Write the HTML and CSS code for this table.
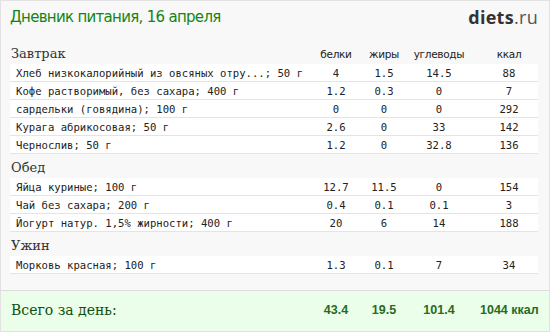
FILE: index.html
```html
<!DOCTYPE html>
<html lang="ru">
<head>
<meta charset="utf-8">
<title>Дневник питания</title>
<link rel="stylesheet" href="styles.css">
</head>
<body>
<div class="page">
  <div class="header">
    <div class="title">Дневник питания, 16 апреля</div>
    <div class="logo"><span class="logo-b">diets</span>.ru</div>
  </div>

  <div class="section">
    <div class="sec-head">
      <div class="sec-name">Завтрак</div>
      <div class="c c1 lbl">белки</div>
      <div class="c c2 lbl">жиры</div>
      <div class="c c3 lbl">углеводы</div>
      <div class="c c4 lbl">ккал</div>
    </div>
    <div class="row"><div class="name">Хлеб низкокалорийный из овсяных отру...; 50 г</div><div class="c c1">4</div><div class="c c2">1.5</div><div class="c c3">14.5</div><div class="c c4">88</div></div>
    <div class="row"><div class="name">Кофе растворимый, без сахара; 400 г</div><div class="c c1">1.2</div><div class="c c2">0.3</div><div class="c c3">0</div><div class="c c4">7</div></div>
    <div class="row"><div class="name">сардельки (говядина); 100 г</div><div class="c c1">0</div><div class="c c2">0</div><div class="c c3">0</div><div class="c c4">292</div></div>
    <div class="row"><div class="name">Курага абрикосовая; 50 г</div><div class="c c1">2.6</div><div class="c c2">0</div><div class="c c3">33</div><div class="c c4">142</div></div>
    <div class="row"><div class="name">Чернослив; 50 г</div><div class="c c1">1.2</div><div class="c c2">0</div><div class="c c3">32.8</div><div class="c c4">136</div></div>
  </div>

  <div class="section">
    <div class="sec-head"><div class="sec-name">Обед</div></div>
    <div class="row"><div class="name">Яйца куриные; 100 г</div><div class="c c1">12.7</div><div class="c c2">11.5</div><div class="c c3">0</div><div class="c c4">154</div></div>
    <div class="row"><div class="name">Чай без сахара; 200 г</div><div class="c c1">0.4</div><div class="c c2">0.1</div><div class="c c3">0.1</div><div class="c c4">3</div></div>
    <div class="row"><div class="name">Йогурт натур. 1,5% жирности; 400 г</div><div class="c c1">20</div><div class="c c2">6</div><div class="c c3">14</div><div class="c c4">188</div></div>
  </div>

  <div class="section">
    <div class="sec-head"><div class="sec-name">Ужин</div></div>
    <div class="row"><div class="name">Морковь красная; 100 г</div><div class="c c1">1.3</div><div class="c c2">0.1</div><div class="c c3">7</div><div class="c c4">34</div></div>
  </div>

  <div class="footer">
    <div class="total-label">Всего за день:</div>
    <div class="c c1 tot">43.4</div>
    <div class="c c2 tot">19.5</div>
    <div class="c c3 tot">101.4</div>
    <div class="c c4 tot">1044 ккал</div>
  </div>
</div>
</body>
</html>
```

FILE: styles.css
```css
html, body {
  margin: 0;
  padding: 0;
  background: #f8f8f8;
}

.page {
  width: 548px;
  height: 330px;
  border: 1px solid #e2e2e2;
  background: #f8f8f8;
  display: flex;
  flex-direction: column;
  overflow: hidden;
}

.header {
  height: 39px;
  display: flex;
  justify-content: space-between;
  align-items: flex-start;
  padding: 0 11px 0 9px;
}

.title {
  font-family: "DejaVu Sans", sans-serif;
  font-size: 15px;
  letter-spacing: -0.7px;
  color: #128512;
  line-height: 18px;
  padding-top: 7px;
}

.logo {
  font-family: "Open Sans", sans-serif;
  font-size: 18px;
  line-height: 20px;
  padding-top: 6px;
  color: #555;
  letter-spacing: 0.3px;
}

.logo-b {
  font-weight: 700;
  color: #333;
}

.section {
  padding: 0 11px 0 9px;
}

.sec-head {
  height: 24px;
  display: flex;
  align-items: flex-end;
}

.sec-name {
  flex: 1;
  font-family: "DejaVu Serif", serif;
  font-size: 13px;
  line-height: 18px;
  color: #333;
  padding-left: 1px;
  padding-bottom: 1px;
}

.lbl {
  font-family: "DejaVu Sans", sans-serif;
  font-size: 10.5px;
  letter-spacing: -0.3px;
  line-height: 18px;
  padding-bottom: 1px;
  color: #222;
}

.row {
  height: 17px;
  display: flex;
  align-items: center;
  background: #fff;
  border-bottom: 1px solid #e4e4e4;
  font-family: "DejaVu Sans Mono", monospace;
  font-size: 10.6px;
  color: #222;
}

.name {
  flex: 1;
  padding-left: 6px;
  white-space: nowrap;
}

.c {
  text-align: center;
}

.c1 { width: 48px; }
.c2 { width: 48px; }
.c3 { width: 62px; }
.c4 { width: 58px; padding-left: 10px; }

.footer {
  margin-top: 16px;
  flex: 1;
  display: flex;
  align-items: center;
  background: #eafeea;
  border-top: 1px solid #dcdcdc;
  padding: 0 11px 2px 9px;
}

.total-label {
  flex: 1;
  font-family: "DejaVu Serif", serif;
  font-size: 14px;
  color: #0f4f0f;
  padding-left: 1px;
}

.tot {
  font-family: "Liberation Sans", sans-serif;
  font-weight: 700;
  font-size: 12.5px;
  color: #2a6a20;
}

.c4.tot {
  white-space: nowrap;
}
```
